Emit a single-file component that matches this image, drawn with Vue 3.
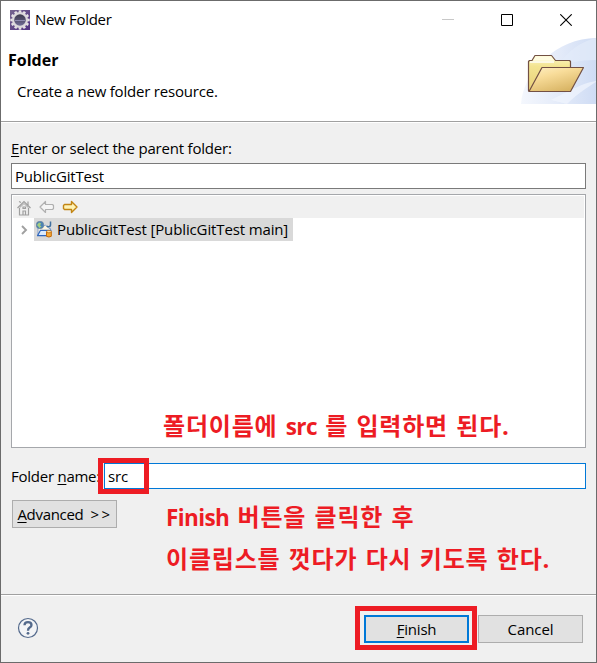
<script setup>
import { ref } from 'vue'

const parentFolder = ref('PublicGitTest')
const folderName = ref('src')
const teeth = Array.from({ length: 12 }, (_, i) => i * 30)
</script>

<template>
  <div class="window">
    <header class="titlebar">
      <svg class="app-icon" width="20" height="20" viewBox="0 0 20 20">
        <defs>
          <linearGradient id="purple" x1="0" y1="0" x2="1" y2="1">
            <stop offset="0" stop-color="#76668f" />
            <stop offset="1" stop-color="#513283" />
          </linearGradient>
          <linearGradient id="lens" x1="0" y1="0" x2="0" y2="1">
            <stop offset="0" stop-color="#393747" />
            <stop offset="0.5" stop-color="#55516f" />
            <stop offset="1" stop-color="#7773a0" />
          </linearGradient>
        </defs>
        <rect width="20" height="20" fill="url(#purple)" />
        <rect v-for="a in teeth" :key="a" x="8.700" y="0.300" width="2.600" height="4" fill="#e6e3e6" :transform="`rotate(${a} 10 10)`" />
        <circle cx="10" cy="10" r="6.900" fill="url(#lens)" stroke="#dcd9dc" stroke-width="2.200" />
        <path d="M5 10.500h10" stroke="#8f8bb0" stroke-width="1" />
      </svg>
      <span class="caption">New Folder</span>
      <div class="controls">
        <svg width="12" height="12" viewBox="0 0 12 12"><path d="M0 5.500h12" stroke="#c8c8c8" /></svg>
        <svg width="12" height="12" viewBox="0 0 12 12"><path d="M.5 .5h11v11H.5z" fill="none" stroke="#000" /></svg>
        <svg width="12" height="12" viewBox="0 0 12 12"><path d="M.3 .3l11.400 11.400M11.700 .3L.3 11.700" stroke="#000" stroke-width="1.100" /></svg>
      </div>
    </header>

    <section class="banner">
      <div class="banner-text">
        <h1>Folder</h1>
        <p>Create a new folder resource.</p>
      </div>
      <svg class="banner-art" width="75" height="66" viewBox="0 0 75 66">
        <defs>
          <linearGradient id="sky" x1="0" y1="0" x2="1" y2="0">
            <stop offset="0" stop-color="#f4f7fd" />
            <stop offset="0.5" stop-color="#e4ebf9" />
            <stop offset="1" stop-color="#cfdcf4" />
          </linearGradient>
          <linearGradient id="back" x1="0" y1="0" x2="0" y2="1">
            <stop offset="0" stop-color="#fbf6c8" />
            <stop offset="0.3" stop-color="#f3e491" />
            <stop offset="1" stop-color="#e8cf78" />
          </linearGradient>
          <linearGradient id="front" x1="0" y1="0" x2="0.6" y2="1">
            <stop offset="0" stop-color="#fff0c4" />
            <stop offset="0.4" stop-color="#f8dc99" />
            <stop offset="1" stop-color="#d9b565" />
          </linearGradient>
        </defs>
        <path d="M0 66C2 33 36 0 75 0V66Z" fill="url(#sky)" />
        <path d="M35 30C46 14 58 4 75 0V22C58 22 46 25 35 30Z" fill="#e3ebf9" opacity=".7" />
        <path d="M46 66C57 55 70 47 75 44V43C62 45 52 51 30 62Z" fill="#f1f5fd" opacity=".7" />
        <path d="M7.500 23.500L8.500 22.500h2.500L14 17.500h16.500l4 5h14l1 1v27l-9 3h-32l-1-1z" fill="url(#back)" stroke="#725044" stroke-width="1.200" stroke-linejoin="round" />
        <path d="M12 22.800L14.700 18.200h15.300l3.500 4.600z" fill="#fffce2" />
        <path d="M8 53.500L21 29.500h41.500L49.500 53.500z" fill="url(#front)" stroke="#725044" stroke-width="1.200" stroke-linejoin="round" />
        <path d="M9 24h24" stroke="#fff" stroke-width="2" opacity=".7" />
      </svg>
    </section>

    <main class="content">
      <label class="parent-label"><u>E</u>nter or select the parent folder:</label>
      <div class="field parent-field"><span>{{ parentFolder }}</span></div>

      <div class="tree">
        <div class="toolbar">
          <svg width="16" height="17" viewBox="0 0 16 17" fill="none" stroke="#9f9f9f">
            <path d="M1.500 9L8 2.500 14.500 9M3.500 9v7h9V9M12 2.500v3.500M3 2.500l2 1M7 16v-4h2.500v4M7 8h2.500v1.500H7z" stroke-width="1.200" />
            <path d="M3.500 8.800L8 4.500l4.500 4.300" />
          </svg>
          <svg width="16" height="16" viewBox="0 0 16 16"><path d="M1 8L6.500 2.500V5.500H13.500l1 1v3l-1 1H6.500V13.500z" fill="#f5f5f5" stroke="#b0b0b0" stroke-width="1.200" stroke-linejoin="round" /></svg>
          <svg width="16" height="16" viewBox="0 0 16 16"><path d="M15 8L9.500 2.500V5.500H2.500l-1 1v3l1 1H9.500V13.500z" fill="#fff3b5" stroke="#c28513" stroke-width="1.400" stroke-linejoin="round" /></svg>
        </div>
        <div class="row">
          <svg class="chevron" width="8" height="10" viewBox="0 0 8 10"><path d="M1 1L5 5 1 9" fill="none" stroke="#a0a0a0" stroke-width="1.900" /></svg>
          <div class="selected">
            <svg class="project-icon" width="17" height="17" viewBox="0 0 17 17">
              <path d="M2 14.500V6.500L7 5.500l2.500-1.500 3.500 3.500h1.500v3z" fill="#fff6df" stroke="#6f93cb" stroke-width=".8" />
              <path d="M1.500 14.700L4.500 9.300H15L12 14.700z" fill="#dcebfd" stroke="#2f66bd" stroke-width="1.200" stroke-linejoin="round" />
              <circle cx="4" cy="4" r="3.800" fill="#4b83b4" stroke="#6b8296" stroke-width=".6" />
              <path d="M1 4l2-2.500 2.200 1L4 4.200l1.500 1.300L3.500 7z" fill="#a5cf80" />
              <path d="M14.500 .5V3.800q0 1.900-1.700 1.900-1.400 0-2-.9" fill="none" stroke="#3f6f9f" stroke-width="1.500" />
              <path d="M10.500 10.700v4.600q2.400 1.400 4.800 0v-4.600z" fill="#f7ab35" stroke="#c2690a" />
              <ellipse cx="12.900" cy="10.700" rx="2.400" ry="1.100" fill="#fff1bd" stroke="#c2690a" stroke-width=".8" />
            </svg>
            <span>PublicGitTest [PublicGitTest main]</span>
          </div>
        </div>
        <p class="note note-input">폴더이름에 <span class="latin">src</span> 를 입력하면 된다.</p>
      </div>

      <div class="name-row">
        <label class="name-label">Folder <u>n</u>ame:</label>
        <div class="field name-field">
          <span>{{ folderName }}</span>
          <i class="mark mark-name"></i>
        </div>
      </div>

      <div class="advanced-row">
        <button class="btn advanced"><span><u>A</u>dvanced</span><span class="gts">&gt;&gt;</span></button>
        <div class="notes">
          <p class="note note-finish"><span class="latin">Finish</span> 버튼을 클릭한 후</p>
          <p class="note note-restart">이클립스를 껏다가 다시 키도록 한다.</p>
        </div>
      </div>
    </main>

    <footer class="footer">
      <svg width="22" height="22" viewBox="0 0 22 22">
        <circle cx="11" cy="11" r="9.500" fill="#f3f4f6" stroke="#546a8c" stroke-width="1.200" />
        <path d="M7.500 8.300Q7.500 5.100 11 5.100T14.500 8Q14.500 9.500 12.700 10.600T11 13.800" fill="none" stroke="#546a8c" stroke-width="2.300" />
        <circle cx="11" cy="16.300" r="1.400" fill="#546a8c" />
      </svg>
      <div class="actions">
        <button class="btn finish"><span><u>F</u>inish</span><i class="mark mark-finish"></i></button>
        <button class="btn cancel"><span>Cancel</span></button>
      </div>
    </footer>
  </div>
</template>

<style>
body {
  margin: 0;
}
</style>

<style scoped>
* {
  box-sizing: border-box;
}
.window {
  width: 597px;
  height: 663px;
  border: 1px solid #6b6b6b;
  background: #f0f0f0;
  color: #000;
  font: 15px/20px "Open Sans", "Noto Sans CJK KR", sans-serif;
  letter-spacing: -0.2px;
  display: flex;
  flex-direction: column;
  overflow: hidden;
  white-space: nowrap;
}
u {
  text-decoration-thickness: 1px;
  text-underline-offset: 2px;
}
h1,
p {
  margin: 0;
}
.titlebar {
  height: 37px;
  flex: none;
  background: #fff;
  display: flex;
  align-items: center;
  padding: 0 24px 0 9px;
}
.caption {
  margin: -1px 0 0 5px;
  letter-spacing: -0.3px;
}
.controls {
  margin-left: auto;
  display: flex;
  gap: 47px;
}
.banner {
  height: 85px;
  flex: none;
  background: #fff;
  border-bottom: 1px solid #fff;
  box-shadow: inset 0 -1px #a0a0a0;
  display: flex;
  justify-content: space-between;
}
.banner-text {
  padding: 12px 0 0 7px;
}
h1 {
  font-size: 16px;
  line-height: 20px;
  font-weight: 700;
  letter-spacing: 0;
}
.banner-text p {
  margin: 11px 0 0 9px;
}
.content {
  height: 471px;
  flex: none;
  padding: 15px 10px 0;
}
.parent-label {
  display: block;
  height: 25px;
}
.field {
  height: 26px;
  border: 1px solid #7a7a7a;
  background: #fff;
  padding: 2px 3px;
}
.tree {
  margin-top: 5px;
  height: 254px;
  border: 1px solid #a5a7ab;
  background: #fff;
  padding: 1px;
  display: flex;
  flex-direction: column;
}
.toolbar {
  height: 22px;
  flex: none;
  background: #f0f0f0;
  padding: 3px 0 0 3px;
  display: flex;
  gap: 7px;
}
.row {
  display: flex;
  align-items: center;
  height: 23px;
  flex: none;
}
.chevron {
  margin: 0 5px 0 8px;
}
.selected {
  width: 259px;
  height: 23px;
  background: #d9d9d9;
  display: flex;
  align-items: center;
  gap: 4px;
  padding: 0 0 2px 2px;
  letter-spacing: -0.13px;
}
.project-icon {
  margin-top: 2px;
}
.note {
  color: #ed1c24;
  font-size: 24px;
  line-height: 41px;
  font-weight: 700;
  letter-spacing: 0.8px;
  word-spacing: 1.3px;
}
.latin {
  font-size: 22.5px;
  letter-spacing: -0.6px;
}
.note-input {
  margin: auto 0 -1px 150px;
}
.name-row {
  display: flex;
  margin-top: 15px;
}
.name-label {
  width: 93px;
  padding-top: 3px;
  letter-spacing: -0.25px;
}
.name-field {
  position: relative;
  flex: 1;
  border-color: #0078d7;
}
.mark {
  position: absolute;
  border: 5px solid #ed1c24;
}
.mark-name {
  left: -7px;
  top: -6px;
  width: 51px;
  height: 36px;
}
.advanced-row {
  display: flex;
  margin-top: 8px;
  padding-left: 1px;
}
.btn {
  position: relative;
  width: 105px;
  height: 28px;
  border: 1px solid #adadad;
  background: #e1e1e1;
  padding: 0;
  font: inherit;
  letter-spacing: inherit;
  color: inherit;
  display: flex;
  align-items: center;
  justify-content: center;
}
.advanced {
  margin-top: 3px;
  padding-right: 2px;
  gap: 7px;
  letter-spacing: -0.3px;
}
.gts {
  letter-spacing: 2.5px;
  margin-right: -3px;
}
.notes {
  margin: -1px 0 0 49px;
}
.footer {
  flex: 1;
  border-top: 1px solid #a0a0a0;
  box-shadow: inset 0 1px #fff;
  display: flex;
  justify-content: space-between;
  padding: 20px 13px 0 16px;
}
.footer > svg {
  margin-top: 2px;
}
.actions {
  display: flex;
  gap: 9px;
}
.cancel {
  letter-spacing: -0.1px;
}
.finish {
  border: 2px solid #0078d7;
}
.mark-finish {
  left: -11px;
  top: -11px;
  width: 122px;
  height: 44px;
}
</style>
